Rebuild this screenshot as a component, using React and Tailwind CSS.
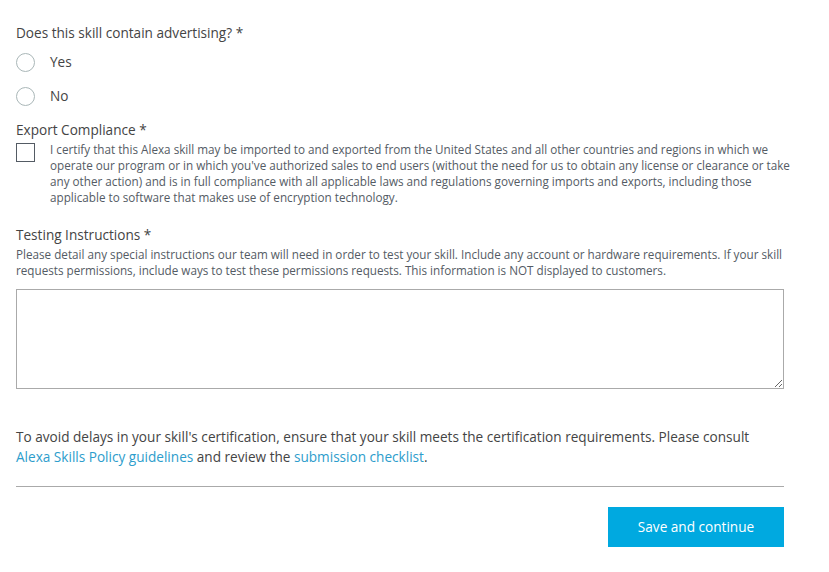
import React from 'react';

const font = { fontFamily: '"Open Sans", "Noto Sans", sans-serif' };

const Radio = ({ label }) => (
  <label className="flex items-center h-[18px]">
    <span className="w-[19px] h-[19px] rounded-full border border-[#aab7b8] bg-white shrink-0"></span>
    <span className="ml-[15px] text-[13.6px] text-[#444]">{label}</span>
  </label>
);

export default function App() {
  return (
    <div className="min-h-screen bg-white pl-4 pr-[45px] pt-[24px] text-[#444]" style={font}>
      <div className="text-[13.6px] leading-[18px]">Does this skill contain advertising? *</div>
      <div className="mt-[11px] flex flex-col gap-[16px]">
        <Radio label="Yes" />
        <Radio label="No" />
      </div>

      <div className="mt-[16px] text-[13.6px] leading-[18px]">Export Compliance *</div>
      <div className="mt-[2px] flex items-start">
        <span className="w-[19px] h-[19px] border border-[#545b64] bg-white shrink-0 mt-[2px]"></span>
        <p className="ml-[15px] -mr-[10px] text-[11.7px] leading-[16px] text-[#545b64]">
          I certify that this Alexa skill may be imported to and exported from the United States and all other countries and regions in which we operate our program or in which you've authorized sales to end users (without the need for us to obtain any license or clearance or take any other action) and is in full compliance with all applicable laws and regulations governing imports and exports, including those applicable to software that makes use of encryption technology.
        </p>
      </div>

      <div className="mt-[21px] text-[13.6px] leading-[18px]">Testing Instructions *</div>
      <p className="mt-[2px] text-[11.7px] leading-[16px] text-[#545b64]">
        Please detail any special instructions our team will need in order to test your skill. Include any account or hardware requirements. If your skill requests permissions, include ways to test these permissions requests. This information is NOT displayed to customers.
      </p>
      <textarea className="mt-[11px] block w-full h-[100px] border border-[#aaa] bg-white outline-none"></textarea>

      <p className="mt-[38px] text-[13.6px] leading-[20px] text-[#444]">
        To avoid delays in your skill's certification, ensure that your skill meets the certification requirements. Please consult{' '}
        <a className="text-[#2d9dcc]">Alexa Skills Policy guidelines</a> and review the{' '}
        <a className="text-[#2d9dcc]">submission checklist</a>.
      </p>
      <hr className="mt-[19px] border-0 border-t border-[#aaa]" />
      <div className="mt-[20px] flex justify-end">
        <button className="w-[176px] h-[40px] bg-[#00a9e0] text-white text-[13.6px]">Save and continue</button>
      </div>
    </div>
  );
}
